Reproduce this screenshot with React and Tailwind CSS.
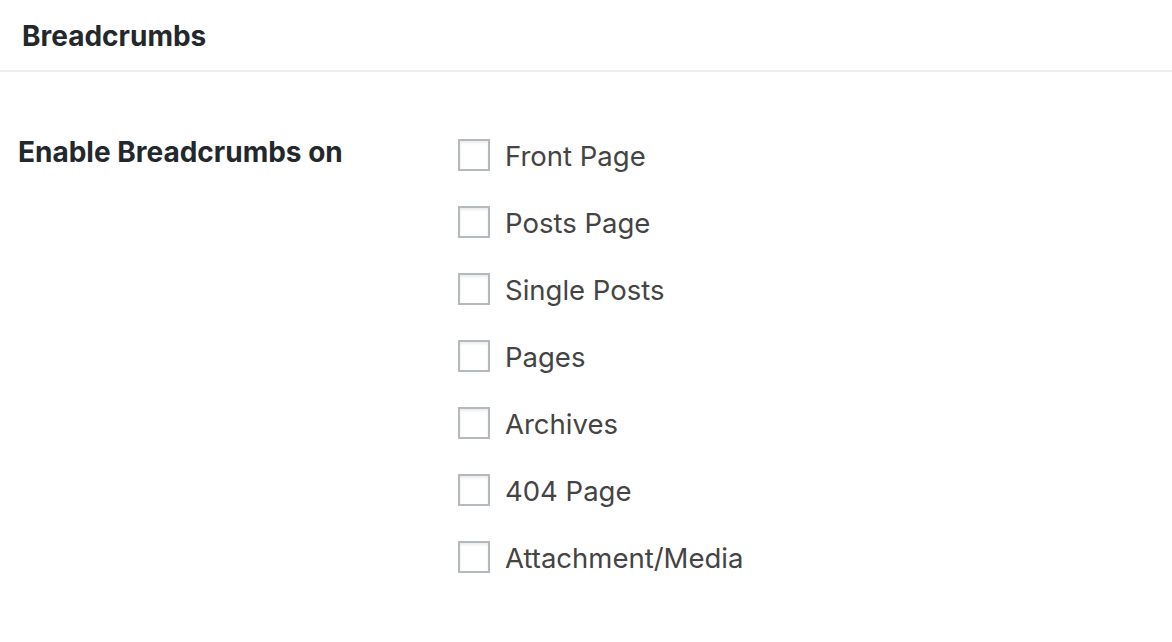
import React from "react";

const items = [
  "Front Page",
  "Posts Page",
  "Single Posts",
  "Pages",
  "Archives",
  "404 Page",
  "Attachment/Media",
];

export default function App() {
  return (
    <div
      className="w-[1172px] h-[642px] bg-white overflow-hidden"
      style={{ fontFamily: "Inter, 'Liberation Sans', sans-serif" }}
    >
      <div className="h-[72px] border-b-2 border-[#eeeeee] pl-[22px] flex items-center">
        <h2 className="text-[28px] font-bold text-[#23282d] leading-none pt-[2px]">
          Breadcrumbs
        </h2>
      </div>
      <div className="flex pt-[49px] pl-[18px]">
        <div className="w-[440px] shrink-0 pt-[17px]">
          <span className="text-[28px] font-bold text-[#23282d] leading-none">
            Enable Breadcrumbs on
          </span>
        </div>
        <ul className="flex flex-col">
          {items.map((label) => (
            <li key={label} className="h-[67px] flex items-center gap-[15px]">
              <span className="w-[32px] h-[32px] border-2 border-[#b4b9be] bg-white shadow-[inset_0_2px_3px_rgba(0,0,0,0.08)] shrink-0" />
              <span className="text-[27.5px] text-[#444444] leading-none pt-[4px]">
                {label}
              </span>
            </li>
          ))}
        </ul>
      </div>
    </div>
  );
}
